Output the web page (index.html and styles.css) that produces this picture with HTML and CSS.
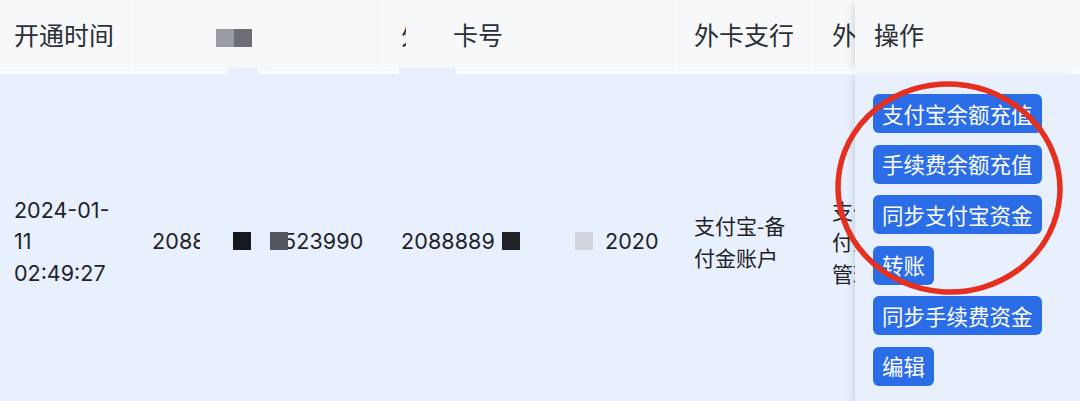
FILE: index.html
```html
<!DOCTYPE html>
<html lang="zh-CN">
<head>
<meta charset="utf-8">
<link rel="stylesheet" href="styles.css">
</head>
<body>
<div class="page">
  <div class="row head">
    <div class="cell c1">开通时间</div>
    <div class="cell c2"><span class="hd-blk"><i class="b1"></i><i class="b2"></i></span></div>
    <div class="cell c3"><span class="clipch">外</span><span class="kh">卡号</span></div>
    <div class="cell c4">外卡支行</div>
    <div class="cell c5"><span class="c5in">外卡户名</span></div>
    <div class="cell c6">操作</div>
    <span class="patch p1"></span>
    <span class="patch p2"></span>
  </div>
  <div class="row body">
    <div class="cell c1"><span class="txt">2024-01-<br>11<br>02:49:27</span></div>
    <div class="cell c2">
      <span class="num clip4">2088</span>
      <span class="sq dark g1"></span>
      <span class="sq mid g2"></span>
      <span class="num tail">523990</span>
    </div>
    <div class="cell c3">
      <span class="num">2088889</span>
      <span class="sq dark2 g3"></span>
      <span class="sq light g4"></span>
      <span class="num g5">2020</span>
    </div>
    <div class="cell c4"><span class="txt">支付宝-备付金账户</span></div>
    <div class="cell c5"><span class="txt c5in">支付宝-备付金账户管理</span></div>
    <div class="cell c6">
      <div class="actions">
        <span class="btn">支付宝余额充值</span>
        <span class="btn">手续费余额充值</span>
        <span class="btn">同步支付宝资金</span>
        <span class="btn">转账</span>
        <span class="btn">同步手续费资金</span>
        <span class="btn">编辑</span>
      </div>
    </div>
  </div>
  <svg class="mark" width="1080" height="401" viewBox="0 0 1080 401">
    <ellipse cx="949" cy="188" rx="111" ry="104" fill="none" stroke="#e5301f" stroke-width="5.5" transform="rotate(4 949 188)"/>
  </svg>
</div>
</body>
</html>
```

FILE: styles.css
```css
* { box-sizing: border-box; }
html, body { margin: 0; padding: 0; }
body {
  width: 1080px;
  height: 401px;
  overflow: hidden;
  background: #e8f0fd;
  font-family: Inter, "Noto Sans CJK SC", sans-serif;
  color: #1f2329;
}
.page {
  position: relative;
  width: 1080px;
  height: 401px;
  overflow: hidden;
}
.row {
  display: flex;
  width: 1080px;
}
.cell {
  flex: none;
  display: flex;
  align-items: center;
}
.c1 { width: 133px; padding-left: 14px; }
.c2 { width: 250px; padding-left: 19px; }
.c3 { width: 294px; padding-left: 18px; }
.c4 { width: 136px; padding-left: 17px; }
.c5 { width: 42px; padding-left: 19px; overflow: hidden; }
.c6 {
  flex: 1;
  padding-left: 18px;
  position: relative;
  z-index: 2;
  box-shadow: -5px 0 7px -3px rgba(40, 50, 70, 0.16);
}

/* header */
.head {
  position: relative;
  height: 74px;
  background: #f7f8fa;
  border-bottom: 3px solid #fcfdfe;
  font-family: "Noto Sans CJK SC", sans-serif;
  font-size: 25px;
  color: #2b2f36;
}
.head .cell {
  height: 71px;
  padding-bottom: 3px;
  border-right: 1px solid #fcfcfd;
}
.head .c6 { background: #f7f8fa; border-right: none; padding-left: 19px; }
.head .c5 { border-right: none; }
.hd-blk { display: flex; margin-left: 64px; margin-top: 8px; }
.hd-blk i { display: block; width: 18px; height: 18px; }
.hd-blk .b1 { background: #999ca3; }
.hd-blk .b2 { background: #6c6e75; }
.clipch {
  display: inline-block;
  width: 5px;
  overflow: hidden;
  white-space: nowrap;
  margin-left: 0;
}
.kh { margin-left: 47px; }
.c5in { display: block; width: 104px; flex: none; white-space: normal; }
.head .c5in { white-space: nowrap; }
.patch {
  position: absolute;
  top: 67px;
  height: 7px;
  background: #e8f0fd;
}
.p1 { left: 227px; width: 31px; }
.p2 { left: 399px; width: 56px; }

/* body */
.body {
  font-size: 21.5px;
  line-height: 31.5px;
}
.body .cell { padding-top: 4px; }
.body .c6 {
  background: #e8f0fd;
  padding-top: 20px;
  padding-bottom: 20px;
}
.txt { display: block; }
.body .c4 .txt { width: 102px; font-family: "Noto Sans CJK SC", sans-serif; font-size: 21px; }
.body .c5 .txt { font-family: "Noto Sans CJK SC", sans-serif; font-size: 21px; }
.num { white-space: nowrap; letter-spacing: 0.1px; }
.clip4 { display: inline-block; width: 48px; overflow: hidden; }
.sq { display: block; width: 18px; height: 18px; flex: none; margin-top: -2px; }
.dark { background: #161820; }
.dark2 { background: #20222a; }
.mid { background: #52555e; }
.light { background: #d0d5df; }
.g1 { margin-left: 33px; }
.g2 { margin-left: 19px; }
.tail { margin-left: -5px; position: relative; z-index: -1; }
.g3 { margin-left: 7px; }
.g4 { margin-left: 55px; }
.g5 { margin-left: 12px; }

.actions {
  display: flex;
  flex-direction: column;
  align-items: flex-start;
  gap: 11.5px;
}
.btn {
  display: inline-flex;
  align-items: center;
  height: 39px;
  padding: 0 9px;
  border-radius: 6px;
  background: #2b6de6;
  color: #ffffff;
  font-family: "Noto Sans CJK SC", sans-serif;
  font-size: 21.5px;
  line-height: 1;
  white-space: nowrap;
}

.mark {
  position: absolute;
  left: 0;
  top: 0;
  z-index: 5;
  pointer-events: none;
}
```
